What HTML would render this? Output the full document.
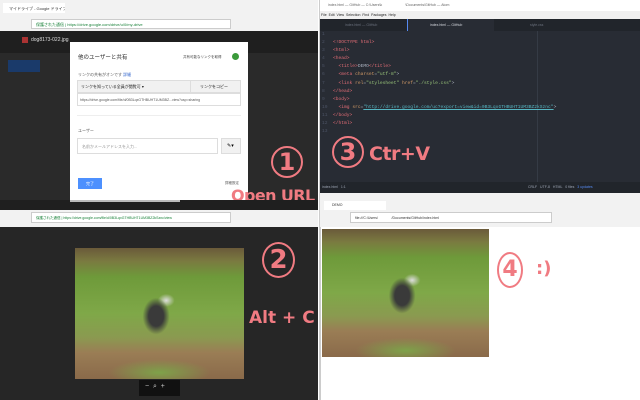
<!DOCTYPE html>
<html><head><meta charset="utf-8"><style>
*{margin:0;padding:0;box-sizing:border-box}
body{width:640px;height:400px;overflow:hidden;position:relative;background:#fff;font-family:"Liberation Sans","Noto Sans CJK JP",sans-serif}
.a{position:absolute;white-space:nowrap}
.pk{color:#f07b82;font-family:"DejaVu Sans","Liberation Sans",sans-serif;font-weight:bold}
.circ{position:absolute;border:2px solid #f07b82;border-radius:50%;color:#f07b82;font-family:"DejaVu Sans",sans-serif;font-weight:bold;text-align:center}
.code{position:absolute;left:333px;font:4.6px "Liberation Mono",monospace;color:#abb2bf;white-space:pre}
.ln{position:absolute;left:322px;font:4.6px "Liberation Mono",monospace;color:#4b5263}
.photo{position:absolute;background:
radial-gradient(ellipse 8% 14% at 48% 52%,#3a3a3a 0,#3a3a3a 55%,rgba(0,0,0,0) 100%),
radial-gradient(ellipse 5% 5% at 54% 40%,#ddd 0,rgba(0,0,0,0) 100%),
radial-gradient(ellipse 30% 10% at 50% 95%,#7ea24a 0,rgba(0,0,0,0) 100%),
linear-gradient(#6a5a3a 0,#7a7a40 10%,#6e9a3a 22%,#7fa848 50%,#8a9a50 68%,#9a7d55 80%,#8a6a4a 100%)}
</style></head><body>
<!-- TOP LEFT -->
<div class="a" style="left:0;top:0;width:318px;height:17px;background:#f2f2f2"></div>
<div class="a" style="left:3px;top:3px;width:62px;height:10px;background:#fff;font-size:4px;color:#333;padding:3px 6px;overflow:hidden">マイドライブ - Google ドライブ</div>
<div class="a" style="left:0;top:17px;width:318px;height:14px;background:#f2f2f2"></div>
<div class="a" style="left:31px;top:19px;width:200px;height:10px;background:#fff;border:1px solid #ccc;font-size:4px;color:#188038;padding:2px 4px">保護された通信 | https://drive.google.com/drive/u/0/my-drive</div>
<div class="a" style="left:0;top:31px;width:318px;height:169px;background:#2a2a2a"></div>
<div class="a" style="left:0;top:31px;width:318px;height:22px;background:#1f1f1f"></div>
<div class="a" style="left:22px;top:37px;width:6px;height:6px;background:#a33"></div>
<div class="a" style="left:31px;top:37px;font-size:5px;color:#ddd">dog8173-022.jpg</div>
<div class="a" style="left:8px;top:60px;width:32px;height:12px;background:#1a3a6a"></div>
<!-- dialog -->
<div class="a" style="left:70px;top:42px;width:178px;height:160px;background:#fff"></div>
<div class="a" style="left:78px;top:53px;font-size:5.5px;color:#222">他のユーザーと共有</div>
<div class="a" style="left:183px;top:55px;font-size:3.5px;color:#444">共有可能なリンクを取得</div>
<div class="a" style="left:232px;top:53px;width:7px;height:7px;border-radius:50%;background:#3a9a3a"></div>
<div class="a" style="left:78px;top:72px;font-size:4px;color:#555">リンクの共有がオンです <span style="color:#36c">詳細</span></div>
<div class="a" style="left:77px;top:80px;width:164px;height:13px;background:#f1f1f1;border:1px solid #ddd"></div>
<div class="a" style="left:190px;top:80px;width:1px;height:13px;background:#ddd"></div>
<div class="a" style="left:81px;top:84px;font-size:4px;color:#222">リンクを知っている全員が閲覧可 ▾</div>
<div class="a" style="left:200px;top:84px;font-size:4px;color:#222">リンクをコピー</div>
<div class="a" style="left:77px;top:93px;width:164px;height:13px;border:1px solid #ddd;font-size:3.5px;color:#555;padding:4px 2px;overflow:hidden">https://drive.google.com/file/d/0B3LqxGTHBUHT1UM3BZ...view?usp=sharing</div>
<div class="a" style="left:77px;top:115px;width:164px;height:1px;background:#eee"></div>
<div class="a" style="left:78px;top:128px;font-size:4px;color:#555">ユーザー</div>
<div class="a" style="left:77px;top:138px;width:141px;height:16px;border:1px solid #ddd;font-size:4px;color:#999;padding:5px 4px">名前かメールアドレスを入力...</div>
<div class="a" style="left:221px;top:138px;width:20px;height:16px;background:#f1f1f1;border:1px solid #ddd;font-size:5px;padding:4px 5px">✎▾</div>
<div class="a" style="left:78px;top:178px;width:24px;height:11px;background:#4d90fe;color:#fff;font-size:4px;text-align:center;padding-top:3px">完了</div>
<div class="a" style="left:225px;top:181px;font-size:3.5px;color:#555">詳細設定</div>
<div class="circ" style="left:271px;top:146px;width:32px;height:32px;font-size:24px;line-height:28px">1</div>
<div class="a pk" style="left:231px;top:186px;font-size:16px;line-height:20px;letter-spacing:-0.6px">Open URL</div>
<!-- TOP RIGHT ATOM -->
<div class="a" style="left:319px;top:0;width:2px;height:400px;background:#ccc"></div>
<div class="a" style="left:320px;top:0;width:320px;height:11px;background:#fff;font-size:3.5px;color:#666;padding:3px 8px">index.html — GitHub — C:\Users\k &nbsp;&nbsp;&nbsp;&nbsp;&nbsp;&nbsp;&nbsp;&nbsp;&nbsp;&nbsp;&nbsp;&nbsp;&nbsp;&nbsp;&nbsp;&nbsp;&nbsp;&nbsp;&nbsp;&nbsp;&nbsp;&nbsp;&nbsp;\Documents\GitHub — Atom</div>
<div class="a" style="left:320px;top:11px;width:320px;height:8px;background:#f0f0f0;font-size:3.5px;color:#222;padding:2px 1px">File &nbsp;Edit &nbsp;View &nbsp;Selection &nbsp;Find &nbsp;Packages &nbsp;Help</div>
<div class="a" style="left:320px;top:19px;width:320px;height:12px;background:#21252b"></div>
<div class="a" style="left:407px;top:19px;width:87px;height:12px;background:#282c34;border-left:1px solid #568af2;font-size:3.5px;color:#d7dae0;padding:4px 0 0 22px">index.html — GitHub</div>
<div class="a" style="left:345px;top:23px;font-size:3.5px;color:#6b717d">index.html — GitHub</div>
<div class="a" style="left:530px;top:23px;font-size:3.5px;color:#6b717d">style.css</div>
<div class="a" style="left:320px;top:31px;width:320px;height:151px;background:#282c34"></div>
<div class="a" style="left:537px;top:31px;width:1px;height:151px;background:#353b45"></div>
<div class="ln" style="top:31px;line-height:8.1px">1<br>2<br>3<br>4<br>5<br>6<br>7<br>8<br>9<br>10<br>11<br>12<br>13</div>
<div class="code" style="top:31px;line-height:8.1px">
<span style="color:#e06c75">&lt;!DOCTYPE html&gt;</span>
<span style="color:#e06c75">&lt;html&gt;</span>
<span style="color:#e06c75">&lt;head&gt;</span>
  <span style="color:#e06c75">&lt;title&gt;</span>DEMO<span style="color:#e06c75">&lt;/title&gt;</span>
  <span style="color:#e06c75">&lt;meta</span> <span style="color:#d19a66">charset</span>=<span style="color:#98c379">"utf-8"</span>&gt;
  <span style="color:#e06c75">&lt;link</span> <span style="color:#d19a66">rel</span>=<span style="color:#98c379">"stylesheet"</span> <span style="color:#d19a66">href</span>=<span style="color:#98c379">"./style.css"</span>&gt;
<span style="color:#e06c75">&lt;/head&gt;</span>
<span style="color:#e06c75">&lt;body&gt;</span>
  <span style="color:#e06c75">&lt;img</span> <span style="color:#d19a66">src</span>=<span style="color:#56b6c2;text-decoration:underline">"http://drive.google.com/uc?export=view&amp;id=0B3LqxGTHBUHT1UM3BZ2kSznc"</span>&gt;
<span style="color:#e06c75">&lt;/body&gt;</span>
<span style="color:#e06c75">&lt;/html&gt;</span></div>
<div class="circ" style="left:332px;top:136px;width:32px;height:32px;font-size:24px;line-height:28px">3</div>
<div class="a pk" style="left:369px;top:143px;font-size:19px;line-height:22px;letter-spacing:-0.5px">Ctr+V</div>
<div class="a" style="left:320px;top:182px;width:320px;height:11px;background:#21252b;font-size:3.5px;color:#9da5b4;padding:3px 2px">index.html &nbsp;&nbsp;1:1<span style="position:absolute;left:208px">CRLF &nbsp;&nbsp;UTF-8 &nbsp;&nbsp;HTML &nbsp;&nbsp;0 files &nbsp;&nbsp;<span style="color:#568af2">3 updates</span></span></div>
<div class="a" style="left:320px;top:193px;width:320px;height:7px;background:#f2f2f2"></div>
<!-- BOTTOM LEFT -->
<div class="a" style="left:0;top:200px;width:318px;height:10px;background:#1f1f1f"></div>
<div class="a" style="left:70px;top:200px;width:110px;height:2px;background:#bbb"></div>
<div class="a" style="left:0;top:210px;width:318px;height:17px;background:#f2f2f2"></div>
<div class="a" style="left:31px;top:212px;width:200px;height:11px;background:#fff;border:1px solid #ccc;font-size:3.5px;color:#188038;padding:3px 4px;overflow:hidden">保護された通信 | https://drive.google.com/file/d/0B3LqxGTHBUHT1UM3BZ2kSznc/view</div>
<div class="a" style="left:0;top:227px;width:318px;height:173px;background:#262626"></div>
<div class="photo" style="left:75px;top:248px;width:169px;height:131px"></div>
<div class="a" style="left:139px;top:380px;width:41px;height:16px;background:#111;color:#ccc;font-size:7px;padding:3px 6px">−&nbsp; ⌕ &nbsp;+</div>
<div class="circ" style="left:262px;top:242px;width:33px;height:36px;font-size:26px;line-height:32px">2</div>
<div class="a pk" style="left:249px;top:308px;font-size:17px;line-height:20px">Alt + C</div>
<!-- BOTTOM RIGHT -->
<div class="a" style="left:320px;top:200px;width:320px;height:10px;background:#f2f2f2"></div>
<div class="a" style="left:324px;top:201px;width:62px;height:9px;background:#fff;font-size:3.5px;color:#333;padding:2px 8px">DEMO</div>
<div class="a" style="left:320px;top:210px;width:320px;height:17px;background:#f2f2f2"></div>
<div class="a" style="left:350px;top:212px;width:202px;height:11px;background:#fff;border:1px solid #ccc;font-size:3.5px;color:#333;padding:3px 4px">file:///C:/Users/ &nbsp;&nbsp;&nbsp;&nbsp;&nbsp;&nbsp;&nbsp;&nbsp;&nbsp;&nbsp;&nbsp;&nbsp;&nbsp;/Documents/GitHub/index.html</div>
<div class="photo" style="left:322px;top:229px;width:167px;height:128px"></div>
<div class="circ" style="left:497px;top:252px;width:26px;height:36px;border-radius:50%;font-size:22px;line-height:32px">4</div>
<div class="a pk" style="left:536px;top:258px;font-size:18px;line-height:22px">:)</div>
</body></html>
